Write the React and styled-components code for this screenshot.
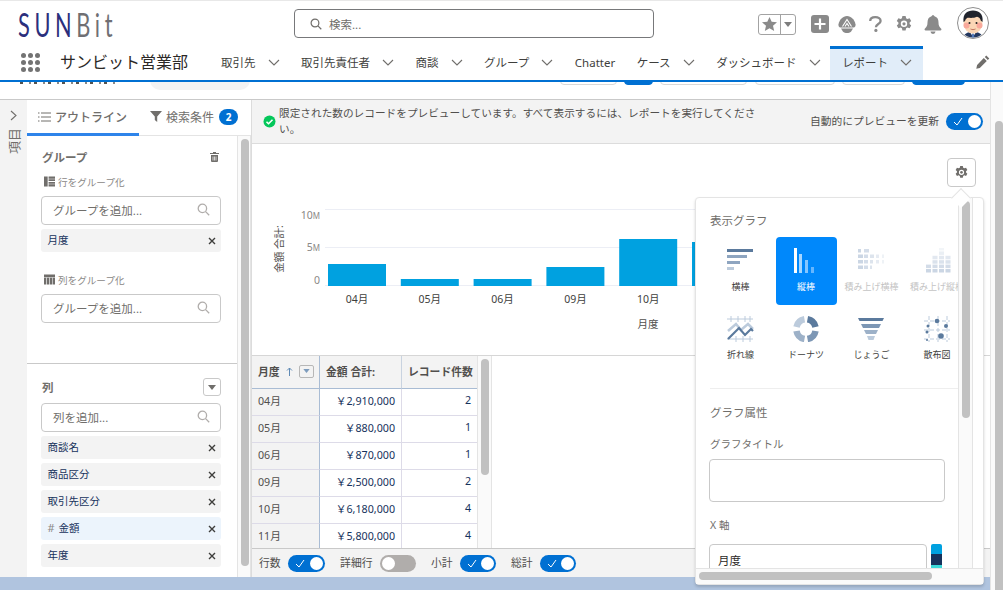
import React from 'react'
import styled, { createGlobalStyle } from 'styled-components'

const Global = createGlobalStyle`
  html, body { margin: 0; padding: 0; height: 100%; overflow: hidden; background: #fff; }
  * { box-sizing: border-box; }
  body {
    font-family: "Noto Sans", "Noto Sans CJK JP", sans-serif;
    font-size: 11px;
    color: #3e3e3c;
  }
`

const Page = styled.div`
  width: 1003px;
  height: 590px;
  display: flex;
  flex-direction: column;
  overflow: hidden;
`

/* header */
const Header = styled.header`
  height: 82px;
  flex: none;
  border-top: 1px solid #e8e8e8;
  border-bottom: 2px solid #0070d2;
  background: #fff;
`
const TopBar = styled.div`
  height: 45px;
  display: flex;
  align-items: flex-start;
  position: relative;
`
const Logo = styled.div`
  width: 294px;
  padding: 4px 0 0 18px;
  font-family: "Lato", sans-serif;
  font-weight: 400;
  font-size: 33px;
  line-height: 38px;
  letter-spacing: 7px;
  color: #2b2f7c;
  white-space: nowrap;
  span { color: #6f6f73; }
  > div { transform: scaleX(.66); transform-origin: left top; }
`
const SearchBox = styled.div`
  width: 360px;
  height: 29px;
  margin-top: 8px;
  border: 1px solid #77787a;
  border-radius: 4px;
  display: flex;
  align-items: center;
  gap: 7px;
  padding-left: 15px;
  color: #706e6b;
  font-size: 11.5px;
`
const TopIcons = styled.div`
  margin-left: 104px;
  display: flex;
  align-items: center;
  height: 34px;
  margin-top: 6px;
`
const FavButton = styled.div`
  width: 38px;
  height: 21px;
  border: 1px solid #a3a3a3;
  border-radius: 3px;
  display: flex;
  margin-right: 15px;
`
const FavPart = styled.div`
  flex: ${p => (p.$grow ? 1 : 'none')};
  width: ${p => (p.$grow ? 'auto' : '15px')};
  border-left: ${p => (p.$grow ? 'none' : '1px solid #a3a3a3')};
  display: flex;
  align-items: center;
  justify-content: center;
`
const IconSlot = styled.div`
  width: ${p => p.$w}px;
  margin-right: ${p => p.$mr}px;
  display: flex;
  justify-content: center;
`
const Avatar = styled.svg`
  width: 32px;
  height: 32px;
  display: block;
  margin-top: -2px;
`
const NavBar = styled.nav`
  height: 34px;
  display: flex;
  align-items: stretch;
`
const Waffle = styled.div`
  width: 60px;
  padding: 7px 0 0 21px;
  display: grid;
  grid-template-columns: repeat(3, 5px);
  grid-auto-rows: 5px;
  gap: 2px;
  align-content: start;
  span { background: #737373; border-radius: 50%; }
`
const AppName = styled.div`
  width: 161px;
  font-size: 16px;
  line-height: 33px;
  color: #2b2826;
  white-space: nowrap;
`
const NavItem = styled.div`
  display: flex;
  align-items: center;
  gap: 12px;
  font-size: 11.5px;
  color: #3e3e3c;
  white-space: nowrap;
  padding-right: ${p => (p.$active ? '11px' : '21.5px')};
  padding-left: ${p => (p.$active ? '12px' : '0')};
  padding-bottom: 2px;
  margin-left: ${p => (p.$active ? '-12px' : '0')};
  background: ${p => (p.$active ? '#e1edf9' : 'transparent')};
  box-shadow: ${p => (p.$active ? 'inset 0 3px 0 #0070d2' : 'none')};
  height: 34px;
`
const Pencil = styled.div`
  margin-left: auto;
  padding: 9px 13px 0 0;
`

/* clipped toolbar under the header */
const Under = styled.div`
  flex: 1;
  display: flex;
  min-height: 0;
`
const Work = styled.div`
  flex: 1;
  display: flex;
  flex-direction: column;
  min-width: 0;
`
const Toolbar = styled.div`
  height: 18px;
  flex: none;
  border-bottom: 1px solid #c9c9c9;
  display: flex;
  overflow: hidden;
  background: #fff;
`
const Sliver = styled.div`
  height: 24px;
  margin-top: -21px;
  margin-left: ${p => p.$ml}px;
  width: ${p => p.$w}px;
  flex: none;
  border: 1px solid ${p => (p.$blue ? '#0070d2' : '#d8d8d8')};
  background: ${p => (p.$blue ? '#0070d2' : '#fff')};
  border-radius: 4px;
`
const TitleScrap = styled.div`
  width: 95px;
  height: 2px;
  margin: 0 35px 0 20px;
  flex: none;
  background: repeating-linear-gradient(90deg, #55534f 0 3px, transparent 3px 9px, #8a8886 9px 11px, transparent 11px 14px);
`
const Pill = styled.div`
  height: 20px;
  margin-top: -12px;
  width: 100px;
  flex: none;
  background: #f3f3f3;
  border-radius: 10px;
`
const Workspace = styled.div`
  flex: 1;
  display: flex;
  min-height: 0;
`
const Rail = styled.div`
  width: 27px;
  flex: none;
  background: #f3f3f3;
  display: flex;
  flex-direction: column;
  align-items: center;
  padding-top: 10px;
  color: #706e6b;
`
const RailLabel = styled.div`
  writing-mode: vertical-rl;
  text-orientation: sideways;
  transform: rotate(180deg);
  font-size: 13px;
  line-height: 14px;
  margin-top: 7px;
`

/* left panel */
const Side = styled.aside`
  width: 224px;
  flex: none;
  background: #fff;
  display: flex;
  flex-direction: column;
`
const Tabs = styled.div`
  height: 36px;
  flex: none;
  display: flex;
  border-bottom: 1px solid #e4e4e4;
`
const Tab = styled.div`
  width: 112px;
  height: 36px;
  display: flex;
  align-items: center;
  gap: 4px;
  padding: 0 0 ${p => (p.$active ? '0' : '3px')} 11px;
  font-size: 12px;
  color: #706e6b;
  border-bottom: ${p => (p.$active ? '3px solid #2e84ea' : 'none')};
  font-weight: ${p => (p.$active ? 500 : 400)};
  white-space: nowrap;
`
const Badge = styled.span`
  width: 19px;
  height: 16px;
  border-radius: 8px;
  background: #0070d2;
  color: #fff;
  font-size: 10px;
  font-weight: 700;
  text-align: center;
  line-height: 16px;
  margin-left: 1px;
`
const SideBody = styled.div`
  flex: 1;
  display: flex;
  min-height: 0;
`
const SideContent = styled.div`
  width: 210px;
  flex: none;
  display: flex;
  flex-direction: column;
`
const GroupSection = styled.section`
  height: 228px;
  flex: none;
  padding: 13px 16px 0 14px;
  border-bottom: 1px solid #c9c9c9;
`
const ColumnSection = styled.section`
  flex: 1;
  padding: 14px 16px 0 14px;
`
const SectionHead = styled.div`
  display: flex;
  justify-content: space-between;
  align-items: center;
  height: ${p => p.$h || 16}px;
  padding-left: 1px;
  font-size: 11.5px;
  font-weight: 700;
  color: #706e6b;
`
const SubLabel = styled.div`
  display: flex;
  align-items: center;
  gap: 3px;
  font-size: 9.6px;
  height: 16px;
  color: #8a8886;
  margin-top: ${p => p.$mt}px;
  padding: 0 0 1px 3px;
`
const AddBox = styled.div`
  height: 29px;
  margin-top: ${p => p.$mt || 6}px;
  border: 1px solid #c9c9c9;
  border-radius: 4px;
  display: flex;
  align-items: center;
  justify-content: space-between;
  padding: 0 10px 2px 11px;
  font-size: 11.5px;
  color: #706e6b;
`
const Chip = styled.div`
  height: 23px;
  margin-top: 4px;
  border-radius: 3px;
  background: ${p => (p.$hl ? '#ecf4fc' : '#f3f3f3')};
  display: flex;
  align-items: center;
  justify-content: space-between;
  padding: 0 5px 0 6.5px;
  font-size: 10.5px;
  color: #16325c;
  span { padding-bottom: 2px; }
  em { font-style: normal; color: #8a8886; font-size: 11px; margin-right: 4px; }
`
const ChipList = styled.div`
  display: flex;
  flex-direction: column;
`
const MiniSelect = styled.div`
  width: 18px;
  height: 18px;
  border: 1px solid #c9c9c9;
  border-radius: 3px;
  display: flex;
  align-items: center;
  justify-content: center;
`
const VTrack = styled.div`
  width: ${p => p.$w}px;
  flex: none;
  background: #fafafa;
  border-left: 1px solid #e4e4e4;
  border-right: 1px solid #e4e4e4;
  padding: 3px 0 0 3px;
`
const Thumb = styled.div`
  background: #c1c1c1;
  border-radius: 4px;
  width: ${p => p.$w || 8}px;
  height: ${p => p.$h}px;
`

/* main column */
const Main = styled.main`
  flex: 1;
  min-width: 0;
  display: flex;
  flex-direction: column;
  border-left: 1px solid #dcdcdc;
  position: relative;
`
const Notice = styled.div`
  height: 44px;
  flex: none;
  background: #f3f3f3;
  border-bottom: 1px solid #dcdcdc;
  display: flex;
  align-items: center;
  padding: 0 7px 0 11px;
  color: #514f4d;
`
const NoticeText = styled.div`
  width: 484px;
  margin: 0 0 2px 3px;
  font-size: 10.67px;
  line-height: 16px;
`
const AutoLabel = styled.div`
  margin: 0 7px 2px auto;
  font-size: 10.75px;
  white-space: nowrap;
`
const Switch = styled.div`
  width: ${p => p.$w || 37}px;
  height: 17px;
  flex: none;
  border-radius: 9px;
  background: ${p => (p.$on ? '#0070d2' : '#b0adab')};
  display: flex;
  align-items: center;
  justify-content: ${p => (p.$on ? 'flex-end' : 'flex-start')};
  padding: 0 2px;
  position: relative;
  i {
    width: 13px;
    height: 13px;
    border-radius: 50%;
    background: #fff;
    display: block;
  }
  svg { position: absolute; left: 7px; top: 4px; }
`
const ChartArea = styled.div`
  height: 212px;
  flex: none;
  border-bottom: 1px solid #d6d6d6;
  position: relative;
  background: #fff;
`
const GearButton = styled.div`
  position: absolute;
  left: 695px;
  top: 14px;
  width: 29px;
  height: 29px;
  border: 1px solid #c9c9c9;
  border-radius: 4px;
  background: #fff;
  display: flex;
  align-items: center;
  justify-content: center;
`
const Lower = styled.div`
  flex: 1;
  min-height: 0;
  display: flex;
  overflow: hidden;
`
const TableWrap = styled.div`
  width: 225px;
  flex: none;
`
const Table = styled.table`
  border-collapse: separate;
  border-spacing: 0;
  table-layout: fixed;
  width: 225px;
  th {
    height: 33px;
    background: #f3f3f3;
    font-size: 10.8px;
    font-weight: 700;
    color: #514f4d;
    border-bottom: 1px solid #a9bcd4;
    border-right: 1px solid #c9d3e0;
    padding: 0 5px 2px 6px;
    text-align: left;
    white-space: nowrap;
  }
  td {
    height: 27px;
    padding: 0 6px 4px;
    font-size: 10.7px;
    color: #16325c;
    text-align: right;
    border-bottom: 1px solid #dddbe8;
    border-right: 1px solid #dddbe8;
    white-space: nowrap;
  }
  td:first-child {
    background: #f3f3f3;
    text-align: left;
    color: #514f4d;
    border-right: 1px solid #a9bcd4;
  }
  th:first-child { border-right: 1px solid #a9bcd4; }
  th:last-child, td:last-child { border-right: none; }
  th:last-child { text-align: right; }
`
const SortHead = styled.div`
  display: flex;
  align-items: center;
  justify-content: space-between;
`
const SortBox = styled.span`
  width: 15px;
  height: 13px;
  border: 1px solid #b7b7b7;
  border-radius: 2px;
  display: flex;
  align-items: center;
  justify-content: center;
`
const Footer = styled.div`
  height: 29px;
  flex: none;
  background: #f3f3f3;
  border-top: 1px solid #c9c9c9;
  display: flex;
  align-items: center;
  padding-left: 7px;
  font-size: 10.8px;
  color: #514f4d;
`
const FooterLabel = styled.span`
  margin: 0 7.5px 2px 0;
`
const FooterGroup = styled.div`
  display: flex;
  align-items: center;
  margin-right: 15px;
`
const BottomStrip = styled.div`
  height: 13px;
  flex: none;
  background: #b0c4df;
`
const PageScroll = styled.div`
  width: 13px;
  flex: none;
  border-left: 1px solid #e4e4e4;
  padding: 39px 0 0 4px;
  background: #fafafa;
  display: flex;
`

/* chart settings popover */
const Popover = styled.div`
  position: absolute;
  left: 443px;
  top: 97px;
  width: 289px;
  height: 388px;
  background: #fff;
  border: 1px solid #e4e4e4;
  border-radius: 4px;
  box-shadow: 0 2px 3px rgba(0, 0, 0, .16);
  display: flex;
  flex-direction: column;
  z-index: 3;
  &::before {
    content: '';
    position: absolute;
    left: 258px;
    top: -7px;
    width: 13px;
    height: 13px;
    background: #fff;
    border-left: 1px solid #e4e4e4;
    border-top: 1px solid #e4e4e4;
    transform: rotate(45deg);
  }
`
const PopBody = styled.div`
  flex: 1;
  min-height: 0;
  display: flex;
`
const PopScrollArea = styled.div`
  width: 262px;
  flex: none;
  overflow: hidden;
  padding: 14px 0 0 14px;
`
const PopTitle = styled.div`
  font-size: 11.5px;
  line-height: 18px;
  color: #706e6b;
  margin-top: ${p => p.$mt || 0}px;
`
const TileGrid = styled.div`
  display: grid;
  grid-template-columns: repeat(4, 61px);
  column-gap: 4.5px;
  grid-auto-rows: 68px;
  margin-top: 7px;
  width: 262px;
`
const Tile = styled.div`
  border-radius: 4px;
  background: ${p => (p.$on ? '#0088fb' : 'transparent')};
  color: ${p => (p.$on ? '#fff' : p.$off ? '#c4c4c4' : '#3e3e3c')};
  display: flex;
  flex-direction: column;
  align-items: center;
  font-size: 9px;
  white-space: nowrap;
  padding-top: 11px;
  svg { display: block; flex: none; }
`
const TileLabel = styled.div`
  margin-top: 6px;
  line-height: 14px;
`
const Divider = styled.div`
  height: 1px;
  background: #eeeeee;
  margin-top: 15px;
`
const FieldLabel = styled.div`
  font-size: 10.5px;
  line-height: 16px;
  color: #706e6b;
  margin-top: ${p => p.$mt}px;
`
const TitleInput = styled.div`
  width: 236px;
  height: 43px;
  border: 1px solid #c9c9c9;
  border-radius: 4px;
  margin-top: 7px;
  margin-left: -1px;
`
const AxisRow = styled.div`
  display: flex;
  gap: 4px;
  margin-top: 11px;
  margin-left: -1px;
`
const AxisInput = styled.div`
  width: 218px;
  height: 38px;
  border: 1px solid #c9c9c9;
  border-radius: 4px;
  padding: 7px 8px;
  font-size: 11.5px;
  color: #2b2826;
`
const Swatches = styled.div`
  width: 11px;
  border-radius: 2px 2px 0 0;
  overflow: hidden;
`
const Swatch = styled.span`
  display: block;
  height: ${p => p.$h}px;
  background: ${p => p.$c};
`
const HScroll = styled.div`
  height: 16px;
  flex: none;
  background: #fafafa;
  border-top: 1px solid #e4e4e4;
  padding: 3px 0 0 3px;
`
const HThumb = styled.div`
  width: 233px;
  height: 8px;
  border-radius: 4px;
  background: #c1c1c1;
`

const Chev = ({ color = '#706e6b', w = 12 }) => (
  <svg width={w} height="7" viewBox="0 0 12 7" fill="none">
    <path d="M1 1l5 5 5-5" stroke={color} strokeWidth="1.1" />
  </svg>
)
const Caret = ({ color = '#706e6b', w = 8, h = 5 }) => (
  <svg width={w} height={h} viewBox="0 0 8 5"><path d="M0 0h8L4 5z" fill={color} /></svg>
)
const SearchIcon = ({ color = '#706e6b', size = 13 }) => (
  <svg width={size} height={size} viewBox="0 0 13 13" fill="none" stroke={color} strokeWidth="1.3">
    <circle cx="5.4" cy="5.4" r="4.2" />
    <path d="M8.6 8.6l3.6 3.6" />
  </svg>
)
const Cross = () => (
  <svg width="8" height="8" viewBox="0 0 8 8" stroke="#3e3e3c" strokeWidth="1.4">
    <path d="M1 1l6 6M7 1L1 7" />
  </svg>
)
const Check = () => (
  <svg width="10" height="9" viewBox="0 0 10 9" fill="none" stroke="#fff" strokeWidth="1">
    <path d="M1 5l3 3 5-7" />
  </svg>
)
const Gear = ({ size = 16, color = '#8a8a8a' }) => (
  <svg width={size} height={size} viewBox="0 0 16 16">
    <path
      fill={color}
      fillRule="evenodd"
      d="M6.4 0h3.2l.5 2.2 1.3.7 2.2-.7 1.6 2.7-1.6 1.6v1.4l1.6 1.6-1.6 2.7-2.2-.7-1.3.7-.5 2.2H6.4l-.5-2.2-1.3-.7-2.2.7L.8 9.5l1.6-1.6V6.5L.8 4.9l1.6-2.7 2.2.7 1.3-.7zM8 4.6a3.2 3.2 0 1 0 0 6.4 3.2 3.2 0 0 0 0-6.4z"
    />
    <circle cx="8" cy="7.8" r="1.6" fill={color} />
  </svg>
)

const BAR = '#5b7a9d'
const MID = '#8ea5c0'
const LOW = '#bccbdc'

const HBarIcon = () => (
  <svg width="27" height="26" viewBox="0 0 27 26">
    <rect x="0" y="1" width="26" height="3" fill={BAR} />
    <rect x="0" y="7" width="20" height="3" fill={MID} />
    <rect x="0" y="13" width="13" height="3" fill={MID} />
    <rect x="0" y="19" width="7" height="3" fill={LOW} />
  </svg>
)
const VBarIcon = () => (
  <svg width="27" height="26" viewBox="0 0 27 26">
    <rect x="1" y="0" width="3" height="25" fill="#fff" />
    <rect x="6" y="6" width="3" height="19" fill="#a6d6ff" />
    <rect x="12" y="12" width="3" height="13" fill="#85c6ff" />
    <rect x="18" y="19" width="3" height="6" fill="#66b6ff" />
  </svg>
)
const StackHIcon = () => {
  const rows = [[3, 7, 0, 0, 0], [7, 4, 4, 3, 2], [7, 4, 3, 3, 2], [7, 4, 2, 0, 0]]
  return (
    <svg width="27" height="26" viewBox="0 0 27 26">
      {rows.map((r, i) =>
        r.map((w, j) => (
          w ? <rect key={`${i}${j}`} x={j * 6} y={1 + i * 5.5} width={Math.min(w, 5)} height="3.5" fill="#cbd6e4" opacity={1 - j * 0.17} /> : null
        ))
      )}
    </svg>
  )
}
const StackVIcon = () => {
  const cols = [2, 4, 6, 4]
  return (
    <svg width="27" height="26" viewBox="0 0 27 26">
      {cols.map((n, i) =>
        Array.from({ length: n }).map((_, j) => (
          <rect key={`${i}${j}`} x={2 + i * 6.5} y={21 - j * 4.4} width="5" height="3.5" fill="#cbd6e4" opacity={1 - j * 0.15} />
        ))
      )}
    </svg>
  )
}
const LineIcon = () => (
  <svg width="27" height="26" viewBox="0 0 27 26" fill="none">
    <path d="M0 3h26M0 23h26M4 0v6M11 0v6M18 0v6M23 0v6M9 20v6M16 20v6M23 20v6" stroke={LOW} strokeWidth="1" />
    <path d="M1 15l8-7 5 6 7-6 5 5" stroke={LOW} strokeWidth="2.5" />
    <path d="M1 23l11-11 6 7 6-6 2 2" stroke={BAR} strokeWidth="2.2" />
  </svg>
)
const DonutIcon = () => (
  <svg width="27" height="26" viewBox="0 0 27 26" fill="none" strokeWidth="6.5">
    <path d="M15 3.3A10 10 0 0 1 23 11" stroke={BAR} transform="translate(-.5 0)" />
    <path d="M23 15A10 10 0 0 1 15 23" stroke="#7d97b5" transform="translate(-.5 0)" />
    <path d="M11 23A10 10 0 0 1 3 15" stroke="#9db1c8" transform="translate(.5 0)" />
    <path d="M3 11A10 10 0 0 1 11 3.3" stroke={LOW} transform="translate(.5 0)" />
  </svg>
)
const FunnelIcon = () => (
  <svg width="27" height="26" viewBox="0 0 27 26">
    <path d="M0 2h26l-1.5 3H1.5z" fill={BAR} />
    <path d="M3 8h20l-2 4H5z" fill="#7d97b5" />
    <path d="M6 14h14l-2 4H8z" fill="#9db1c8" />
    <path d="M9 20h8l-1.5 4h-5z" fill={LOW} />
  </svg>
)
const ScatterIcon = () => (
  <svg width="27" height="26" viewBox="0 0 27 26" fill="none">
    <path d="M0 5h26M0 14h26M0 23h26M5 0v26M14 0v26M23 0v26" stroke={LOW} strokeWidth="1" strokeDasharray="4 2" />
    <circle cx="13" cy="5" r="2.3" fill={BAR} />
    <circle cx="22" cy="10" r="2" fill={BAR} />
    <circle cx="4" cy="10" r="1.5" fill={BAR} />
    <circle cx="17" cy="20" r="2.8" fill={BAR} />
    <circle cx="3" cy="16" r="1.5" fill={BAR} />
    <circle cx="3" cy="24" r="1" fill={BAR} />
  </svg>
)

const chartTiles = [
  { label: '横棒', Icon: HBarIcon },
  { label: '縦棒', Icon: VBarIcon, on: true },
  { label: '積み上げ横棒', Icon: StackHIcon, off: true },
  { label: '積み上げ縦棒', Icon: StackVIcon, off: true },
  { label: '折れ線', Icon: LineIcon },
  { label: 'ドーナツ', Icon: DonutIcon },
  { label: 'じょうご', Icon: FunnelIcon },
  { label: '散布図', Icon: ScatterIcon },
]

const bars = [
  { label: '04月', top: 264 },
  { label: '05月', top: 279 },
  { label: '06月', top: 279 },
  { label: '09月', top: 267 },
  { label: '10月', top: 239 },
  { label: '11月', top: 242 },
]

const rows = [
  ['04月', '￥2,910,000', 2],
  ['05月', '￥880,000', 1],
  ['06月', '￥870,000', 1],
  ['09月', '￥2,500,000', 2],
  ['10月', '￥6,180,000', 4],
  ['11月', '￥5,800,000', 4],
]

const navItems = [
  { label: '取引先', chev: true },
  { label: '取引先責任者', chev: true },
  { label: '商談', chev: true },
  { label: 'グループ', chev: true },
  { label: 'Chatter' },
  { label: 'ケース', chev: true },
  { label: 'ダッシュボード', chev: true },
]

const columnsList = ['商談名', '商品区分', '取引先区分', '金額', '年度']

const Chart = () => (
  <svg width="445" height="211" viewBox="0 0 445 211" style={{ display: 'block' }}>
    {[65, 103, 141].map(y => (
      <line key={y} x1="73" x2="445" y1={y + 0.5} y2={y + 0.5} stroke="#eceef5" />
    ))}
    {bars.map((b, i) => (
      <rect key={b.label} x={76 + i * 72.8} y={b.top - 144} width="58" height={286 - b.top} fill="#00a1e0" />
    ))}
    {bars.slice(0, 5).map((b, i) => (
      <text key={b.label} x={105 + i * 72.8} y="159" fontSize="10.5" fill="#3e3e3c" textAnchor="middle">{b.label}</text>
    ))}
    <g fontSize="10.5" fill="#8a8886" textAnchor="end">
      <text x="68" y="75">10<tspan fontSize="8">M</tspan></text>
      <text x="68" y="107">5<tspan fontSize="8">M</tspan></text>
      <text x="68" y="140">0</text>
    </g>
    <text x="396" y="184" fontSize="10.5" fill="#514f4d" textAnchor="middle">月度</text>
    <text transform="translate(31 105) rotate(-90)" fontSize="10.5" fill="#514f4d" textAnchor="middle">金額 合計:</text>
  </svg>
)

const App = () => {
  return (
    <Page>
      <Global />
      <Header>
        <TopBar>
          <Logo><div>SUN<span>Bit</span></div></Logo>
          <SearchBox>
            <SearchIcon size={12} />
            検索...
          </SearchBox>
          <TopIcons>
            <FavButton>
              <FavPart $grow>
                <svg width="15" height="14" viewBox="0 0 15 14"><path fill="#8a8a8a" d="M7.5 0l2.2 4.8 5.3.5-4 3.5 1.2 5.2-4.700-2.800L2.800 14 4 8.800 0 5.300l5.300-.5z" /></svg>
              </FavPart>
              <FavPart><Caret color="#7d7d7d" /></FavPart>
            </FavButton>
            <IconSlot $w={18} $mr={9}>
              <svg width="18" height="18" viewBox="0 0 18 18">
                <rect width="18" height="18" rx="3" fill="#8a8a8a" />
                <path d="M9 3.5v11M3.5 9h11" stroke="#fff" strokeWidth="2.2" />
              </svg>
            </IconSlot>
            <IconSlot $w={18} $mr={12}>
              <svg width="18" height="17" viewBox="0 0 18 17">
                <path fill="#8a8a8a" d="M9 0c4.200 0 7.500 3.600 8.500 8.300.3 1.700-.5 3.200-2 3.200h-13c-1.500 0-2.300-1.500-2-3.200C1.500 3.600 4.800 0 9 0z" />
                <path fill="none" stroke="#fff" strokeWidth="1.1" d="M4.500 10.500L9 3.500l4.500 7M7 10.500l2-3 2 3" />
                <path fill="#8a8a8a" d="M3 12.500h12l-2 3.300c-1 .8-2.500 1.200-4 1.200s-3-.4-4-1.200z" />
              </svg>
            </IconSlot>
            <IconSlot $w={14} $mr={14}>
              <svg width="13" height="16" viewBox="0 0 13 16" fill="none">
                <path d="M1.200 5C1.200 2.500 3.300 1.200 6.300 1.200s5.300 1.500 5.300 3.700c0 3.100-4.700 3-4.700 6.300" stroke="#8a8a8a" strokeWidth="2.3" />
                <circle cx="6.900" cy="14.400" r="1.600" fill="#8a8a8a" />
              </svg>
            </IconSlot>
            <IconSlot $w={16} $mr={12}><Gear size={16} /></IconSlot>
            <IconSlot $w={18} $mr={15}>
              <svg width="18" height="19" viewBox="0 0 18 19">
                <path fill="#8a8a8a" d="M9 0a2 2 0 0 1 1.500 1.200C13.500 2 14.500 4.500 14.500 7.500c0 3 .8 4.500 2.500 6 .8.700.5 2-.7 2H1.700c-1.200 0-1.500-1.300-.7-2 1.700-1.500 2.500-3 2.500-6 0-3 1-5.500 4-6.300A2 2 0 0 1 9 0z" />
                <path fill="#8a8a8a" d="M6.500 16.500h5a2.500 2.500 0 0 1-5 0z" />
              </svg>
            </IconSlot>
            <Avatar viewBox="0 0 32 32">
              <defs>
                <clipPath id="face-clip"><circle cx="16" cy="16" r="14.5" /></clipPath>
              </defs>
              <circle cx="16" cy="16" r="15.5" fill="#fff" stroke="#8e8e8e" />
              <g clipPath="url(#face-clip)">
                <path d="M6 31c1-5 5-6 10-6s9 1 10 6z" fill="#24385f" />
                <path d="M13 25l3 5 3-5z" fill="#fff" />
                <path d="M15.200 26.500h1.600l.5 4h-2.600z" fill="#4f78b8" />
                <ellipse cx="16" cy="16" rx="9.5" ry="10.5" fill="#fbd6b5" />
                <circle cx="9.500" cy="18.500" r="3" fill="#f8a99b" />
                <circle cx="22.500" cy="18.500" r="3" fill="#f8a99b" />
                <path d="M6.500 15C5.500 7 10 3.500 16 3.500S26.500 7 25.500 15l-1.800-1.500c-.4-2-1.700-3.200-3.700-3.700-3 1.500-7 1-9.500 1-1.500.8-2.200 2-2.400 3.200z" fill="#20232c" />
                <circle cx="12.500" cy="16" r="1" fill="#222" />
                <circle cx="19.500" cy="16" r="1" fill="#222" />
                <path d="M13.500 22c1.500.8 3.500.8 5 0" stroke="#b5604c" strokeWidth=".8" fill="none" />
              </g>
            </Avatar>
          </TopIcons>
        </TopBar>
        <NavBar>
          <Waffle>{Array.from({ length: 9 }).map((_, i) => <span key={i} />)}</Waffle>
          <AppName>サンビット営業部</AppName>
          {navItems.map(n => (
            <NavItem key={n.label}>
              {n.label}
              {n.chev && <Chev />}
            </NavItem>
          ))}
          <NavItem $active>
            レポート
            <Chev />
          </NavItem>
          <Pencil>
            <svg width="14" height="14" viewBox="0 0 14 14"><path fill="#706e6b" d="M10.300.6l3 3-1.500 1.500-3-3zM7.800 3l3 3-7 7-3.500.8.800-3.800z" /></svg>
          </Pencil>
        </NavBar>
      </Header>

      <Under>
        <Work>
          <Toolbar>
            <TitleScrap />
            <Pill />
            <Sliver $ml={310} $w={57} />
            <Sliver $ml={7} $w={29} $blue />
            <Sliver $ml={7} $w={87} />
            <Sliver $ml={8} $w={80} />
            <Sliver $ml={7} $w={63} />
            <Sliver $ml={7} $w={53} $blue />
          </Toolbar>
          <Workspace>
            <Rail>
              <svg width="7" height="11" viewBox="0 0 7 11" fill="none" stroke="#706e6b" strokeWidth="1.1"><path d="M1 1l5 4.500L1 10" /></svg>
              <RailLabel>項目</RailLabel>
            </Rail>
            <Side>
              <Tabs>
                <Tab $active>
                  <svg width="13" height="10" viewBox="0 0 13 10" stroke="#706e6b" strokeWidth="1">
                    <path d="M3 1h10M3 5h10M3 9h10M0 1h1.500M0 5h1.500M0 9h1.500" />
                  </svg>
                  アウトライン
                </Tab>
                <Tab>
                  <svg width="12" height="11" viewBox="0 0 12 11"><path fill="#706e6b" d="M0 0h12L7.200 5.500V11L4.800 9V5.500z" /></svg>
                  検索条件
                  <Badge>2</Badge>
                </Tab>
              </Tabs>
              <SideBody>
                <SideContent>
                  <GroupSection>
                    <SectionHead>
                      グループ
                      <svg width="9" height="10" viewBox="0 0 9 10" style={{ marginRight: 2 }}>
                        <path fill="#706e6b" d="M3 0h3v1h3v1H0V1h3zM1 3h7v6a1 1 0 0 1-1 1H2a1 1 0 0 1-1-1z" />
                        <path stroke="#fff" strokeWidth=".7" d="M3 4.500v4M4.500 4.500v4M6 4.500v4" />
                      </svg>
                    </SectionHead>
                    <SubLabel $mt={9}>
                      <svg width="11" height="11" viewBox="0 0 12 11"><path fill="#706e6b" d="M0 0h4v11H0zM5 0h7v2.500H5zM5 3h7v2H5zM5 6h7v2H5zM5 8.500h7V11H5z" /></svg>
                      行をグループ化
                    </SubLabel>
                    <AddBox>
                      グループを追加...
                      <SearchIcon color="#b0adab" />
                    </AddBox>
                    <Chip><span>月度</span><Cross /></Chip>
                    <SubLabel $mt={20}>
                      <svg width="11" height="11" viewBox="0 0 12 11"><path fill="#706e6b" d="M0 0h12v3H0zM0 3.500h2.500V11H0zM3.200 3.500h2.500V11H3.200zM6.400 3.500h2.500V11H6.400zM9.500 3.500H12V11H9.500z" /></svg>
                      列をグループ化
                    </SubLabel>
                    <AddBox>
                      グループを追加...
                      <SearchIcon color="#b0adab" />
                    </AddBox>
                  </GroupSection>
                  <ColumnSection>
                    <SectionHead $h={18}>
                      列
                      <MiniSelect><Caret /></MiniSelect>
                    </SectionHead>
                    <AddBox $mt={7}>
                      列を追加...
                      <SearchIcon color="#b0adab" />
                    </AddBox>
                    <ChipList>
                      {columnsList.map(c => (
                        <Chip key={c} $hl={c === '金額'}>
                          <span>{c === '金額' && <em>#</em>}{c}</span>
                          <Cross />
                        </Chip>
                      ))}
                    </ChipList>
                  </ColumnSection>
                </SideContent>
                <VTrack $w={14}>
                  <Thumb $h={427} />
                </VTrack>
              </SideBody>
            </Side>
            <Main>
              <Notice>
                <svg width="13" height="13" viewBox="0 0 13 13" style={{ flex: 'none' }}>
                  <circle cx="6.500" cy="6.500" r="6" fill="#04c75a" />
                  <path d="M3.500 6.700l2 2 4-4" stroke="#fff" strokeWidth="1.6" fill="none" />
                </svg>
                <NoticeText>限定された数のレコードをプレビューしています。すべて表示するには、レポートを実行してください。</NoticeText>
                <AutoLabel>自動的にプレビューを更新</AutoLabel>
                <Switch $on><Check /><i /></Switch>
              </Notice>
              <ChartArea>
                <Chart />
                <GearButton><Gear size={13} color="#706e6b" /></GearButton>
              </ChartArea>
              <Lower>
                <TableWrap>
                  <Table>
                    <colgroup>
                      <col style={{ width: 68 }} />
                      <col style={{ width: 82 }} />
                      <col style={{ width: 75 }} />
                    </colgroup>
                    <thead>
                      <tr>
                        <th>
                          <SortHead>
                            月度
                            <svg width="7" height="9" viewBox="0 0 7 9" fill="none" stroke="#5f8ab5" strokeWidth="1"><path d="M3.500 9V1M1 3.500L3.500 1 6 3.500" /></svg>
                            <SortBox><Caret color="#7d9cbd" w={7} h={4} /></SortBox>
                          </SortHead>
                        </th>
                        <th>金額 合計:</th>
                        <th>レコード件数</th>
                      </tr>
                    </thead>
                    <tbody>
                      {rows.map(r => (
                        <tr key={r[0]}>
                          <td>{r[0]}</td>
                          <td>{r[1]}</td>
                          <td>{r[2]}</td>
                        </tr>
                      ))}
                    </tbody>
                  </Table>
                </TableWrap>
                <VTrack $w={15}>
                  <Thumb $h={116} />
                </VTrack>
              </Lower>
              <Footer>
                <FooterGroup><FooterLabel>行数</FooterLabel><Switch $on><Check /><i /></Switch></FooterGroup>
                <FooterGroup><FooterLabel>詳細行</FooterLabel><Switch $w={36}><i /></Switch></FooterGroup>
                <FooterGroup><FooterLabel>小計</FooterLabel><Switch $on $w={36}><Check /><i /></Switch></FooterGroup>
                <FooterGroup><FooterLabel>総計</FooterLabel><Switch $on $w={36}><Check /><i /></Switch></FooterGroup>
              </Footer>
              <Popover>
                <PopBody>
                  <PopScrollArea>
                    <PopTitle>表示グラフ</PopTitle>
                    <TileGrid>
                      {chartTiles.map(t => (
                        <Tile key={t.label} $on={t.on} $off={t.off}>
                          <t.Icon />
                          <TileLabel>{t.label}</TileLabel>
                        </Tile>
                      ))}
                    </TileGrid>
                    <Divider />
                    <PopTitle $mt={15}>グラフ属性</PopTitle>
                    <FieldLabel $mt={14}>グラフタイトル</FieldLabel>
                    <TitleInput />
                    <FieldLabel $mt={15}>X 軸</FieldLabel>
                    <AxisRow>
                      <AxisInput>月度</AxisInput>
                      <Swatches>
                        <Swatch $h={10} $c="#00a1e0" />
                        <Swatch $h={11} $c="#16325c" />
                        <Swatch $h={10} $c="#3cd9d9" />
                      </Swatches>
                    </AxisRow>
                  </PopScrollArea>
                  <VTrack $w={15}>
                    <Thumb $h={217} />
                  </VTrack>
                </PopBody>
                <HScroll><HThumb /></HScroll>
              </Popover>
            </Main>
          </Workspace>
          <BottomStrip />
        </Work>
        <PageScroll><Thumb $w={9} $h={480} /></PageScroll>
      </Under>
    </Page>
  )
}

export default App
